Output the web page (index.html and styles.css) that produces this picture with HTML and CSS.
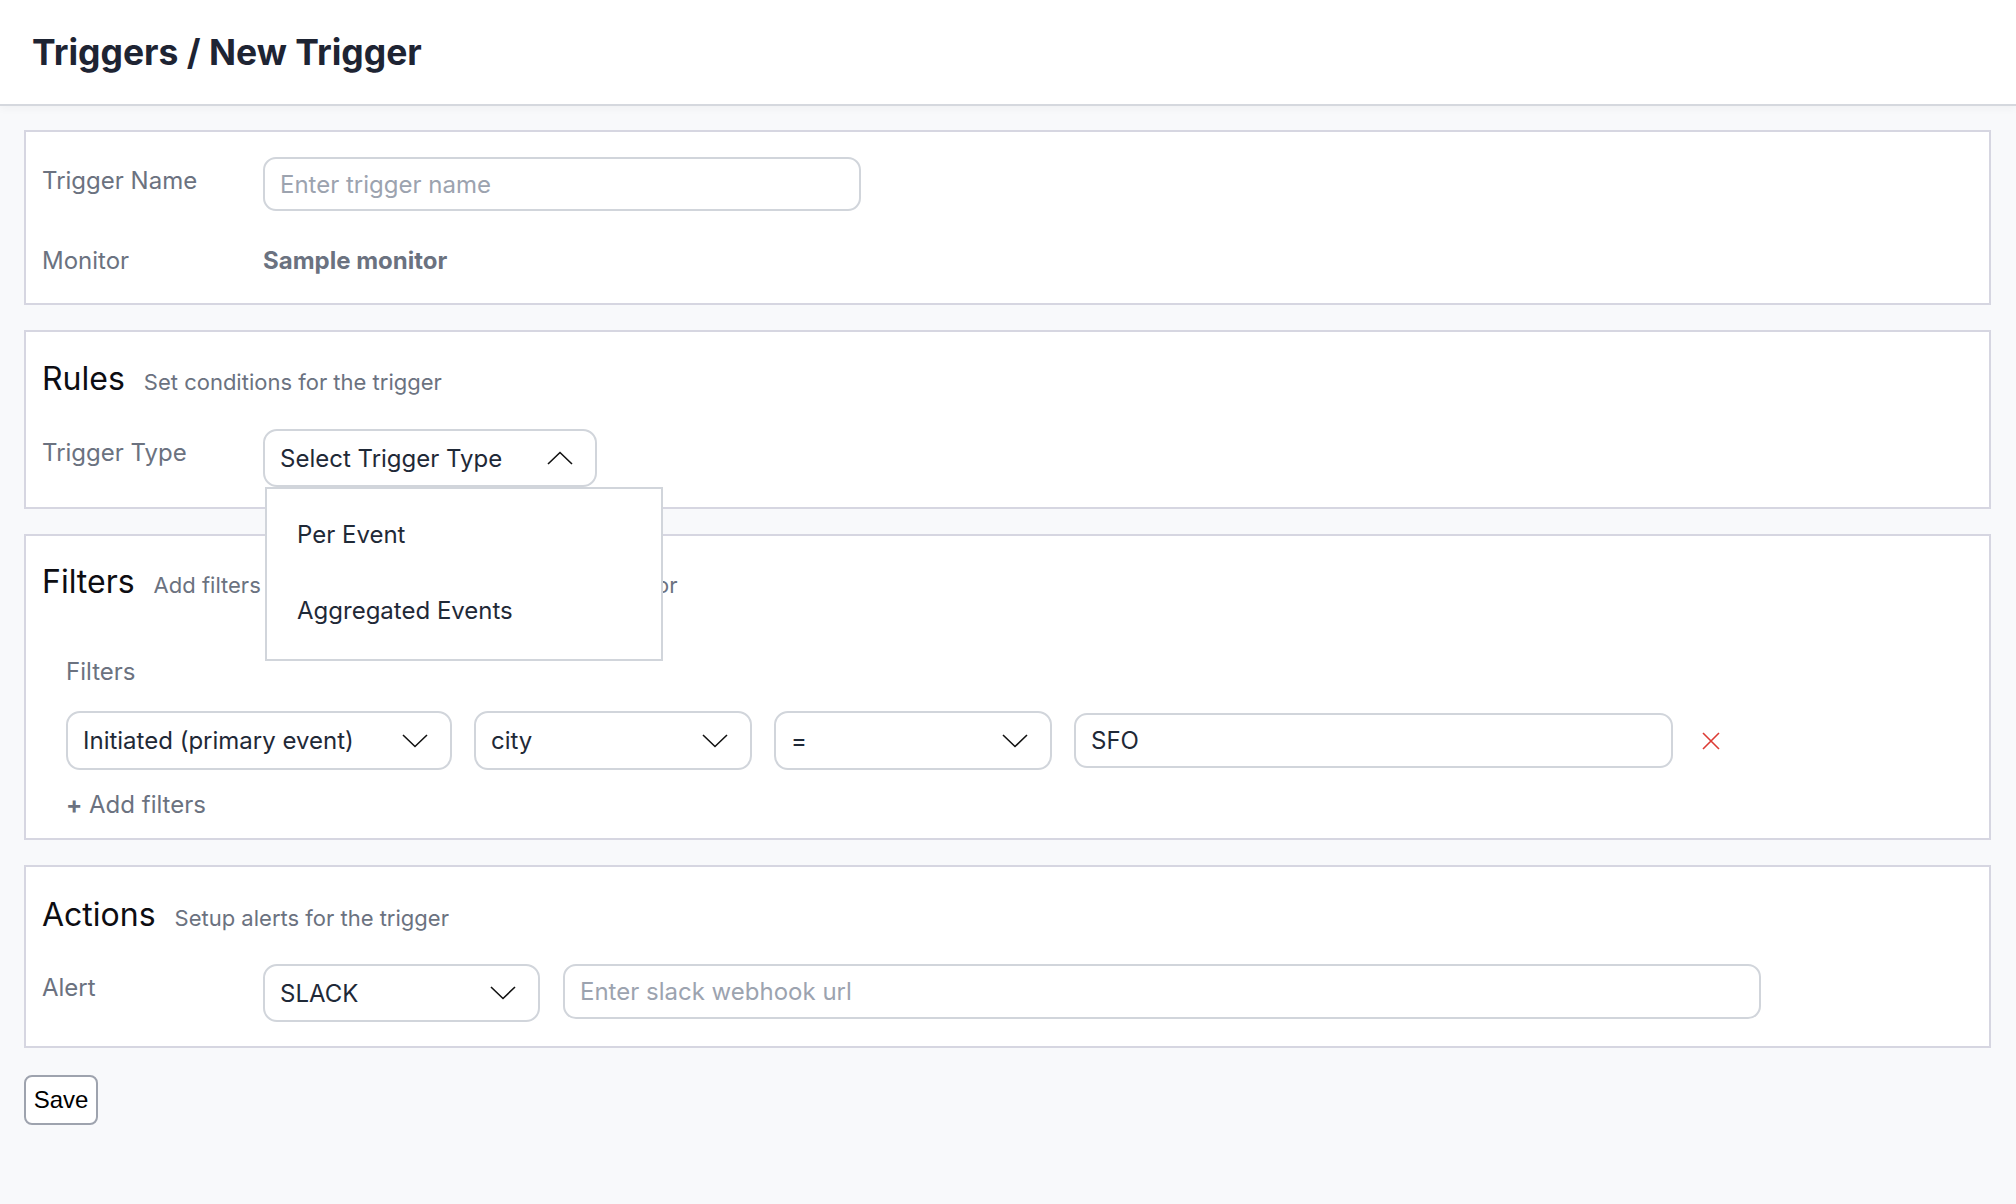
FILE: index.html
```html
<!DOCTYPE html>
<html lang="en">
<head>
<meta charset="utf-8">
<title>Triggers / New Trigger</title>
<link rel="stylesheet" href="styles.css">
</head>
<body>
<header class="topbar">
  <h1 class="page-title">Triggers / New Trigger</h1>
</header>
<main class="page">
  <section class="card card-basic">
    <div class="field-row row-name">
      <label class="field-label">Trigger Name</label>
      <input class="text-input input-name" type="text" placeholder="Enter trigger name">
    </div>
    <div class="field-row row-monitor">
      <span class="field-label label-plain">Monitor</span>
      <span class="monitor-value">Sample monitor</span>
    </div>
  </section>

  <section class="card card-rules">
    <div class="section-head">
      <h2 class="section-title">Rules</h2>
      <span class="section-sub">Set conditions for the trigger</span>
    </div>
    <div class="field-row">
      <label class="field-label">Trigger Type</label>
      <div class="select-wrap">
        <div class="select select-type">
          <span class="select-text">Select Trigger Type</span>
          <svg class="chevron" viewBox="0 0 26 14" width="26" height="14"><path d="M1 13 L13 1.5 L25 13" fill="none" stroke="#111" stroke-width="1.6"/></svg>
        </div>
        <ul class="menu">
          <li class="menu-item">Per Event</li>
          <li class="menu-item">Aggregated Events</li>
        </ul>
      </div>
    </div>
  </section>

  <section class="card card-filters">
    <div class="section-head">
      <h2 class="section-title">Filters</h2>
      <span class="section-sub">Add filters to narrow down events for your monitor</span>
    </div>
    <div class="filters-body">
      <div class="sub-label">Filters</div>
      <div class="filter-row">
        <div class="select sel-event">
          <span class="select-text">Initiated (primary event)</span>
          <svg class="chevron" viewBox="0 0 26 14" width="26" height="14"><path d="M1 1 L13 12.5 L25 1" fill="none" stroke="#111" stroke-width="1.6"/></svg>
        </div>
        <div class="select sel-prop">
          <span class="select-text">city</span>
          <svg class="chevron" viewBox="0 0 26 14" width="26" height="14"><path d="M1 1 L13 12.5 L25 1" fill="none" stroke="#111" stroke-width="1.6"/></svg>
        </div>
        <div class="select sel-op">
          <span class="select-text">=</span>
          <svg class="chevron" viewBox="0 0 26 14" width="26" height="14"><path d="M1 1 L13 12.5 L25 1" fill="none" stroke="#111" stroke-width="1.6"/></svg>
        </div>
        <input class="text-input input-value" type="text" value="SFO">
        <svg class="remove-icon" viewBox="0 0 18 18" width="18" height="18"><path d="M1 1 L17 17 M17 1 L1 17" fill="none" stroke="#dc3b34" stroke-width="1.6"/></svg>
      </div>
      <div class="add-filters"><span class="plus">+</span> Add filters</div>
    </div>
  </section>

  <section class="card card-actions">
    <div class="section-head">
      <h2 class="section-title">Actions</h2>
      <span class="section-sub">Setup alerts for the trigger</span>
    </div>
    <div class="field-row">
      <label class="field-label">Alert</label>
      <div class="select sel-alert">
        <span class="select-text">SLACK</span>
        <svg class="chevron" viewBox="0 0 26 14" width="26" height="14"><path d="M1 1 L13 12.5 L25 1" fill="none" stroke="#111" stroke-width="1.6"/></svg>
      </div>
      <input class="text-input input-url" type="text" placeholder="Enter slack webhook url">
    </div>
  </section>

  <button class="save-btn" type="button">Save</button>
</main>
</body>
</html>
```

FILE: styles.css
```css
* { box-sizing: border-box; }

html, body {
  margin: 0;
  padding: 0;
}

body {
  background: #f8f9fb;
  font-family: Inter, "Noto Sans", "Liberation Sans", sans-serif;
  color: #1f2937;
  min-height: 1204px;
}

.topbar {
  background: #ffffff;
  height: 106px;
  border-bottom: 2px solid #d5d8de;
  box-shadow: 0 3px 8px rgba(0, 0, 0, 0.035);
  padding: 31px 32px 0;
}

.page-title {
  margin: 0;
  font-size: 35.5px;
  line-height: 44px;
  font-weight: 700;
  color: #1e2433;
}

.page {
  padding: 24px 25px 0 24px;
}

.card {
  background: #ffffff;
  border: 2px solid #d6d6e1;
  margin-bottom: 25px;
  padding-left: 16px;
  padding-right: 16px;
}

.card-basic { padding-top: 25px; padding-bottom: 27px; }
.card-rules { padding-top: 29px; padding-bottom: 20px; }
.card-filters { padding-top: 28px; padding-bottom: 18px; }
.card-actions { padding-top: 30px; padding-bottom: 24px; }

.field-row {
  display: flex;
  align-items: flex-start;
}

.row-name { margin-bottom: 35px; }

.field-label {
  width: 221px;
  flex: 0 0 221px;
  font-size: 24px;
  line-height: 30px;
  color: #6b7280;
  padding-top: 9px;
}

.label-plain { padding-top: 0; }

.monitor-value {
  font-size: 24px;
  line-height: 30px;
  font-weight: 700;
  color: #6b7280;
}

.text-input {
  height: 54px;
  border: 2px solid #d1d5db;
  border-radius: 13px;
  background: #ffffff;
  padding: 0 15px;
  font-family: Inter, "Noto Sans", "Liberation Sans", sans-serif;
  font-size: 24px;
  color: #1f2937;
  outline: none;
}

.text-input::placeholder { color: #9ca3af; }

.input-name { width: 598px; }

.section-head {
  display: flex;
  align-items: baseline;
  height: 36px;
  margin-bottom: 32px;
}

.card-actions .section-head { margin-bottom: 31px; }
.card-filters .section-head { margin-bottom: 57px; }

.section-title {
  margin: 0;
  font-size: 32px;
  line-height: 36px;
  font-weight: 400;
  color: #0d0d12;
}

.section-sub {
  margin-left: 19px;
  font-size: 22px;
  color: #6b7280;
  white-space: nowrap;
}

.select-wrap { position: relative; }

.select {
  height: 58px;
  border: 2px solid #d1d5db;
  border-radius: 14px;
  background: #ffffff;
  display: flex;
  align-items: center;
  justify-content: space-between;
  padding: 0 22px 0 15px;
  font-size: 24px;
  color: #1f2937;
}

.select-text { white-space: nowrap; }

.chevron { flex: 0 0 auto; display: block; }

.select-type { width: 334px; }

.menu {
  position: absolute;
  left: 2px;
  top: 58px;
  width: 398px;
  margin: 0;
  list-style: none;
  background: #ffffff;
  border: 2px solid #d1d5db;
  padding: 8px 0 10px;
  z-index: 10;
}

.menu-item {
  height: 76px;
  padding: 23px 30px;
  font-size: 24px;
  line-height: 30px;
  color: #1f2937;
}

.filters-body {
  padding-left: 24px;
}

.sub-label {
  font-size: 24px;
  line-height: 30px;
  color: #6b7280;
  margin-bottom: 24px;
}

.filter-row {
  display: flex;
  align-items: center;
  gap: 22px;
  height: 59px;
}

.filter-row .select { height: 59px; }
.sel-event { width: 386px; }
.sel-prop { width: 278px; }
.sel-op { width: 278px; }
.input-value { width: 599px; height: 55px; }

.remove-icon {
  margin-left: 7px;
  display: block;
}

.add-filters {
  margin-top: 20px;
  font-size: 24px;
  line-height: 30px;
  color: #6b7280;
}

.plus { font-weight: 700; }

.sel-alert { width: 277px; }
.input-url { width: 1198px; height: 55px; margin-left: 23px; }

.save-btn {
  margin-top: 2px;
  width: 74px;
  height: 50px;
  border: 2px solid #9ea3ae;
  border-radius: 8px;
  background: #ffffff;
  font-family: "Liberation Sans", Arial, sans-serif;
  font-size: 24px;
  color: #000000;
  padding: 0;
}
```
